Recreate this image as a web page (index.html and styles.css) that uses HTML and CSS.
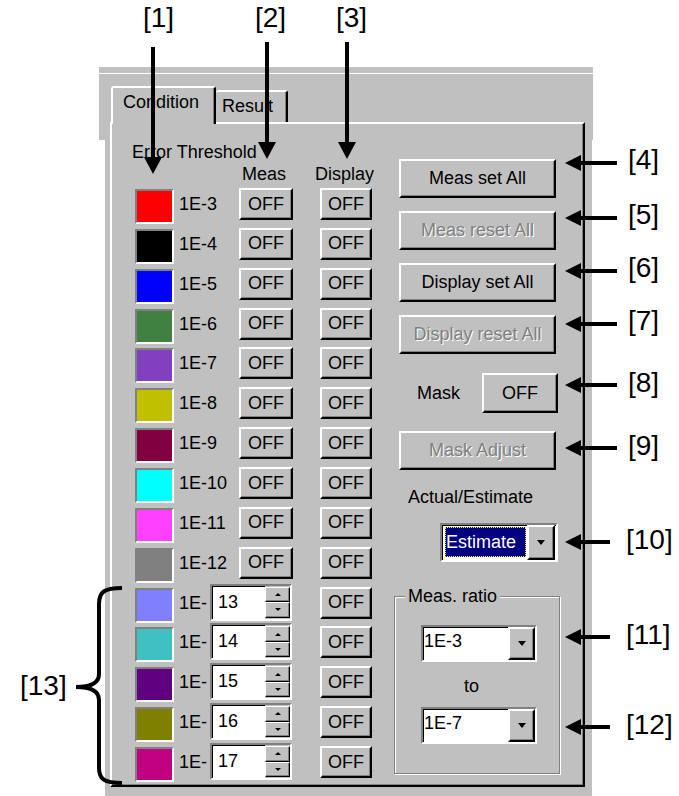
FILE: index.html
```html
<!DOCTYPE html>
<html lang="en">
<head>
    <meta charset="UTF-8">
    <title>Error Threshold - Condition</title>
    <link rel="stylesheet" href="styles.css">
</head>
<body>

<div class="shot">
    <div class="window">
        <div class="window-body">
            <div class="tabs">
                <div class="tab tab-active">Condition</div>
                <div class="tab tab-result">Result</div>
            </div>

            <div class="panel">
                <!-- Columna izquierda: umbrales -->
                <div class="col-left">
                    <div class="title">Error Threshold</div>
                    <div class="heads">
                        <span>Meas</span>
                        <span class="head-disp">Display</span>
                    </div>
                    <div class="rows">
                        <span class="swatch c3"></span><span class="lbl">1E-3</span><button class="btn">OFF</button><button class="btn btn-disp">OFF</button>
                        <span class="swatch c4"></span><span class="lbl">1E-4</span><button class="btn">OFF</button><button class="btn btn-disp">OFF</button>
                        <span class="swatch c5"></span><span class="lbl">1E-5</span><button class="btn">OFF</button><button class="btn btn-disp">OFF</button>
                        <span class="swatch c6"></span><span class="lbl">1E-6</span><button class="btn">OFF</button><button class="btn btn-disp">OFF</button>
                        <span class="swatch c7"></span><span class="lbl">1E-7</span><button class="btn">OFF</button><button class="btn btn-disp">OFF</button>
                        <span class="swatch c8"></span><span class="lbl">1E-8</span><button class="btn">OFF</button><button class="btn btn-disp">OFF</button>
                        <span class="swatch c9"></span><span class="lbl">1E-9</span><button class="btn">OFF</button><button class="btn btn-disp">OFF</button>
                        <span class="swatch c10"></span><span class="lbl">1E-10</span><button class="btn">OFF</button><button class="btn btn-disp">OFF</button>
                        <span class="swatch c11"></span><span class="lbl">1E-11</span><button class="btn">OFF</button><button class="btn btn-disp">OFF</button>
                        <span class="swatch c12"></span><span class="lbl">1E-12</span><button class="btn">OFF</button><button class="btn btn-disp">OFF</button>

                        <span class="swatch c13"></span>
                        <div class="spin-cell"><span class="lbl">1E-</span><div class="spin"><span class="spin-val">13</span><span class="spin-btns"><span class="spin-up"></span><span class="spin-dn"></span></span></div></div>
                        <button class="btn btn-disp">OFF</button>

                        <span class="swatch c14"></span>
                        <div class="spin-cell"><span class="lbl">1E-</span><div class="spin"><span class="spin-val">14</span><span class="spin-btns"><span class="spin-up"></span><span class="spin-dn"></span></span></div></div>
                        <button class="btn btn-disp">OFF</button>

                        <span class="swatch c15"></span>
                        <div class="spin-cell"><span class="lbl">1E-</span><div class="spin"><span class="spin-val">15</span><span class="spin-btns"><span class="spin-up"></span><span class="spin-dn"></span></span></div></div>
                        <button class="btn btn-disp">OFF</button>

                        <span class="swatch c16"></span>
                        <div class="spin-cell"><span class="lbl">1E-</span><div class="spin"><span class="spin-val">16</span><span class="spin-btns"><span class="spin-up"></span><span class="spin-dn"></span></span></div></div>
                        <button class="btn btn-disp">OFF</button>

                        <span class="swatch c17"></span>
                        <div class="spin-cell"><span class="lbl">1E-</span><div class="spin"><span class="spin-val">17</span><span class="spin-btns"><span class="spin-up"></span><span class="spin-dn"></span></span></div></div>
                        <button class="btn btn-disp">OFF</button>
                    </div>
                </div>

                <!-- Columna derecha: botones y combos -->
                <div class="col-right">
                    <button class="btn rbtn">Meas set All</button>
                    <button class="btn rbtn" disabled>Meas reset All</button>
                    <button class="btn rbtn">Display set All</button>
                    <button class="btn rbtn" disabled>Display reset All</button>
                    <div class="mask-row">
                        <span class="mask-lbl">Mask</span>
                        <button class="btn mask-btn">OFF</button>
                    </div>
                    <button class="btn rbtn mask-adj" disabled>Mask Adjust</button>
                    <div class="ae-lbl">Actual/Estimate</div>
                    <div class="combo combo-ae">
                        <span class="combo-sel">Estimate</span>
                        <span class="drop"></span>
                    </div>
                    <fieldset class="group">
                        <legend>Meas. ratio</legend>
                        <div class="combo combo-ratio">
                            <span class="combo-val">1E-3</span>
                            <span class="drop"></span>
                        </div>
                        <div class="to">to</div>
                        <div class="combo combo-ratio">
                            <span class="combo-val">1E-7</span>
                            <span class="drop"></span>
                        </div>
                    </fieldset>
                </div>
            </div>
        </div>
    </div>

    <!-- Flechas y numeros de referencia -->
    <svg class="marks" width="679" height="796" viewBox="0 0 679 796">
        <g fill="#000">
            <rect x="151" y="47" width="4" height="113"/>
            <polygon points="144,157 162,157 153,174"/>
            <rect x="265" y="42" width="4" height="103"/>
            <polygon points="258,142 276,142 267,159"/>
            <rect x="345" y="42" width="4" height="103"/>
            <polygon points="338,142 356,142 347,159"/>

            <polygon points="565,163 581,155 581,171"/><rect x="578" y="161" width="39" height="4"/>
            <polygon points="565,218 581,210 581,226"/><rect x="578" y="216" width="39" height="4"/>
            <polygon points="565,271 581,263 581,279"/><rect x="578" y="269" width="39" height="4"/>
            <polygon points="565,324 581,316 581,332"/><rect x="578" y="322" width="39" height="4"/>
            <polygon points="565,385 581,377 581,393"/><rect x="578" y="383" width="39" height="4"/>
            <polygon points="565,448 581,440 581,456"/><rect x="578" y="446" width="39" height="4"/>
            <polygon points="565,542 581,534 581,550"/><rect x="578" y="540" width="32" height="4"/>
            <polygon points="565,637 581,629 581,645"/><rect x="578" y="635" width="32" height="4"/>
            <polygon points="565,727 581,719 581,735"/><rect x="578" y="725" width="32" height="4"/>
        </g>
        <path d="M122 588 C104 588 99 592 99 604 L99 674 C99 682 92 687 76 687 C92 687 99 692 99 700 L99 768 C99 779 104 783 122 783" fill="none" stroke="#000" stroke-width="4"/>
        <g class="tags">
            <text x="143" y="27">[1]</text>
            <text x="255" y="27">[2]</text>
            <text x="336" y="27">[3]</text>
            <text x="628" y="169">[4]</text>
            <text x="628" y="224">[5]</text>
            <text x="628" y="277">[6]</text>
            <text x="628" y="330">[7]</text>
            <text x="628" y="392">[8]</text>
            <text x="628" y="455">[9]</text>
            <text x="626" y="549">[10]</text>
            <text x="626" y="644">[11]</text>
            <text x="626" y="734">[12]</text>
            <text x="20" y="695">[13]</text>
        </g>
    </svg>
</div>

</body>
</html>
```

FILE: styles.css
```css
/* Estilos basicos: dialogo gris estilo Windows */
body {
    margin: 0;
    background: #fff;
    font-family: "Liberation Sans", Arial, sans-serif;
    font-size: 18px;
    color: #000;
}
.shot {
    position: relative;
    width: 679px;
    height: 796px;
    padding: 67px 0 0 99px;
    box-sizing: border-box;
    overflow: hidden;
}
.window {
    width: 494px;
    height: 729px;
    background: #c0c0c0;
    padding-top: 6px;
    box-sizing: border-box;
    clip-path: polygon(0 0, 100% 0, 100% 73px, 493px 73px, 493px 100%, 6px 100%, 6px 73px, 0 73px);
}
.window-body {
    border-top: 1px solid #fff;
    padding: 12px 0 0 11px;
}

/* Pestañas */
.tabs {
    display: flex;
    align-items: flex-end;
    height: 36px;
}
.tab {
    box-sizing: border-box;
    height: 32px;
    border: 2px solid;
    border-color: #fff #000 transparent #fff;
    border-bottom: 0;
    border-radius: 3px 3px 0 0;
    box-shadow: inset -1px 0 #808080;
    padding: 4px 0 0 6px;
    line-height: 20px;
    background: #c0c0c0;
}
.tab-active {
    position: relative;
    z-index: 1;
    width: 105px;
    height: 38px;
    margin: 0 0 -2px 1px;
    padding-left: 10px;
}
.tab-result {
    width: 72px;
    border-left: 0;
}

.panel {
    display: flex;
    width: 475px;
    height: 665px;
    box-sizing: border-box;
    border: 2px solid;
    border-color: #fff #000 #000 #fff;
    box-shadow: inset -1px -1px #808080;
}

/* Botones */
.btn {
    box-sizing: border-box;
    width: 54px;
    height: 32px;
    padding: 0;
    background: #c0c0c0;
    border: 2px solid;
    border-color: #fff #000 #000 #fff;
    box-shadow: inset -1px -1px #808080;
    font: inherit;
    color: #000;
}
.btn:disabled {
    color: #808080;
    text-shadow: 1px 1px #fff;
}

/* Columna izquierda */
.col-left {
    width: 259px;
    padding: 18px 0 0 23px;
}
.title {
    margin-left: -3px;
    line-height: 20px;
}
.heads {
    display: flex;
    margin-top: 2px;
    padding-left: 107px;
    line-height: 20px;
}
.head-disp {
    margin-left: 29px;
}
.rows {
    display: grid;
    grid-template-columns: 44px 60px 81px 52px;
    grid-auto-rows: 39.86px;
    align-items: start;
    margin-top: 4px;
}
.lbl {
    line-height: 32px;
}
.btn-disp {
    width: 52px;
}
.swatch {
    width: 39px;
    height: 35px;
    box-sizing: border-box;
    border: 2px solid;
    border-color: #808080 #fff #fff #808080;
    margin-top: 1px;
}
.c3 { background: #ff0000; }
.c4 { background: #000000; }
.c5 { background: #0000ff; }
.c6 { background: #408040; }
.c7 { background: #8040c0; }
.c8 { background: #c0c000; }
.c9 { background: #800040; }
.c10 { background: #00ffff; }
.c11 { background: #ff40ff; }
.c12 { background: #808080; }
.c13 { background: #8080ff; }
.c14 { background: #40c0c0; }
.c15 { background: #600080; }
.c16 { background: #808000; }
.c17 { background: #c00080; }

/* Casillas numericas */
.spin-cell {
    grid-column: 2 / 4;
    display: flex;
    align-items: flex-start;
}
.spin {
    display: flex;
    width: 82px;
    height: 37px;
    box-sizing: border-box;
    margin: -3px 0 0 3px;
    border: 2px solid;
    border-color: #808080 #fff #fff #808080;
    box-shadow: inset 1px 1px #000;
    background: #fff;
}
.spin-val {
    flex: 1;
    padding-left: 6px;
    line-height: 33px;
}
.spin-btns {
    display: flex;
    flex-direction: column;
    width: 25px;
    padding: 1px 0 1px 0;
    background: #c0c0c0;
}
.spin-up, .spin-dn {
    flex: 1;
    display: flex;
    align-items: center;
    justify-content: center;
    border: 1px solid;
    border-color: #fff #000 #000 #fff;
    box-shadow: inset -1px -1px #808080;
}
.spin-up::after {
    content: "";
    border-left: 3px solid transparent;
    border-right: 3px solid transparent;
    border-bottom: 3px solid #000;
}
.spin-dn::after {
    content: "";
    border-left: 3px solid transparent;
    border-right: 3px solid transparent;
    border-top: 3px solid #000;
}

/* Columna derecha */
.col-right {
    display: flex;
    flex-direction: column;
    align-items: flex-start;
    width: 166px;
    padding-top: 35px;
}
.rbtn {
    width: 157px;
    height: 39px;
    margin-left: 5px;
}
.rbtn + .rbtn {
    margin-top: 13px;
}
.mask-row {
    display: flex;
    align-items: center;
    margin-top: 19px;
    padding-left: 23px;
}
.mask-lbl {
    width: 65px;
}
.mask-btn {
    width: 76px;
    height: 40px;
}
.mask-adj {
    margin-top: 18px;
}
.ae-lbl {
    margin: 17px 0 0 14px;
    line-height: 20px;
}

.combo {
    display: flex;
    box-sizing: border-box;
    border: 2px solid;
    border-color: #808080 #fff #fff #808080;
    box-shadow: inset 1px 1px #000;
    background: #fff;
}
.combo-ae {
    width: 118px;
    height: 39px;
    margin: 16px 0 0 46px;
}
.combo-sel {
    width: 81px;
    box-sizing: border-box;
    margin: 2px 1px 3px 3px;
    border: 1px dotted #ffff00;
    background: #000080;
    color: #fff;
    line-height: 28px;
}
.drop {
    display: flex;
    align-items: center;
    justify-content: center;
    width: 28px;
    box-sizing: border-box;
    background: #c0c0c0;
    border: 2px solid;
    border-color: #fff #000 #000 #fff;
    box-shadow: inset -1px -1px #808080;
}
.drop::after {
    content: "";
    border-left: 4px solid transparent;
    border-right: 4px solid transparent;
    border-top: 5px solid #000;
}

.group {
    width: 166px;
    min-width: 0;
    box-sizing: border-box;
    margin: 24px 0 0 0;
    padding: 0 0 29px 10px;
    border: 1px solid #808080;
    box-shadow: inset 1px 1px #fff, 1px 1px #fff;
}
.group legend {
    padding: 0 3px;
    line-height: 20px;
    background: #c0c0c0;
}
.combo-ratio {
    width: 116px;
    height: 37px;
    margin: 19px 0 0 16px;
}
.combo-ratio + .to + .combo-ratio {
    margin-top: 11px;
}
.combo-val {
    flex: 1;
    padding-left: 1px;
    line-height: 29px;
}
.combo-ratio .drop {
    width: 27px;
}
.to {
    margin: 14px 0 0 59px;
    line-height: 20px;
}

/* Anotaciones encima de la captura */
.marks {
    position: absolute;
    left: 0;
    top: 0;
}
.tags text {
    font-family: "Liberation Sans", Arial, sans-serif;
    font-size: 28px;
}
```
